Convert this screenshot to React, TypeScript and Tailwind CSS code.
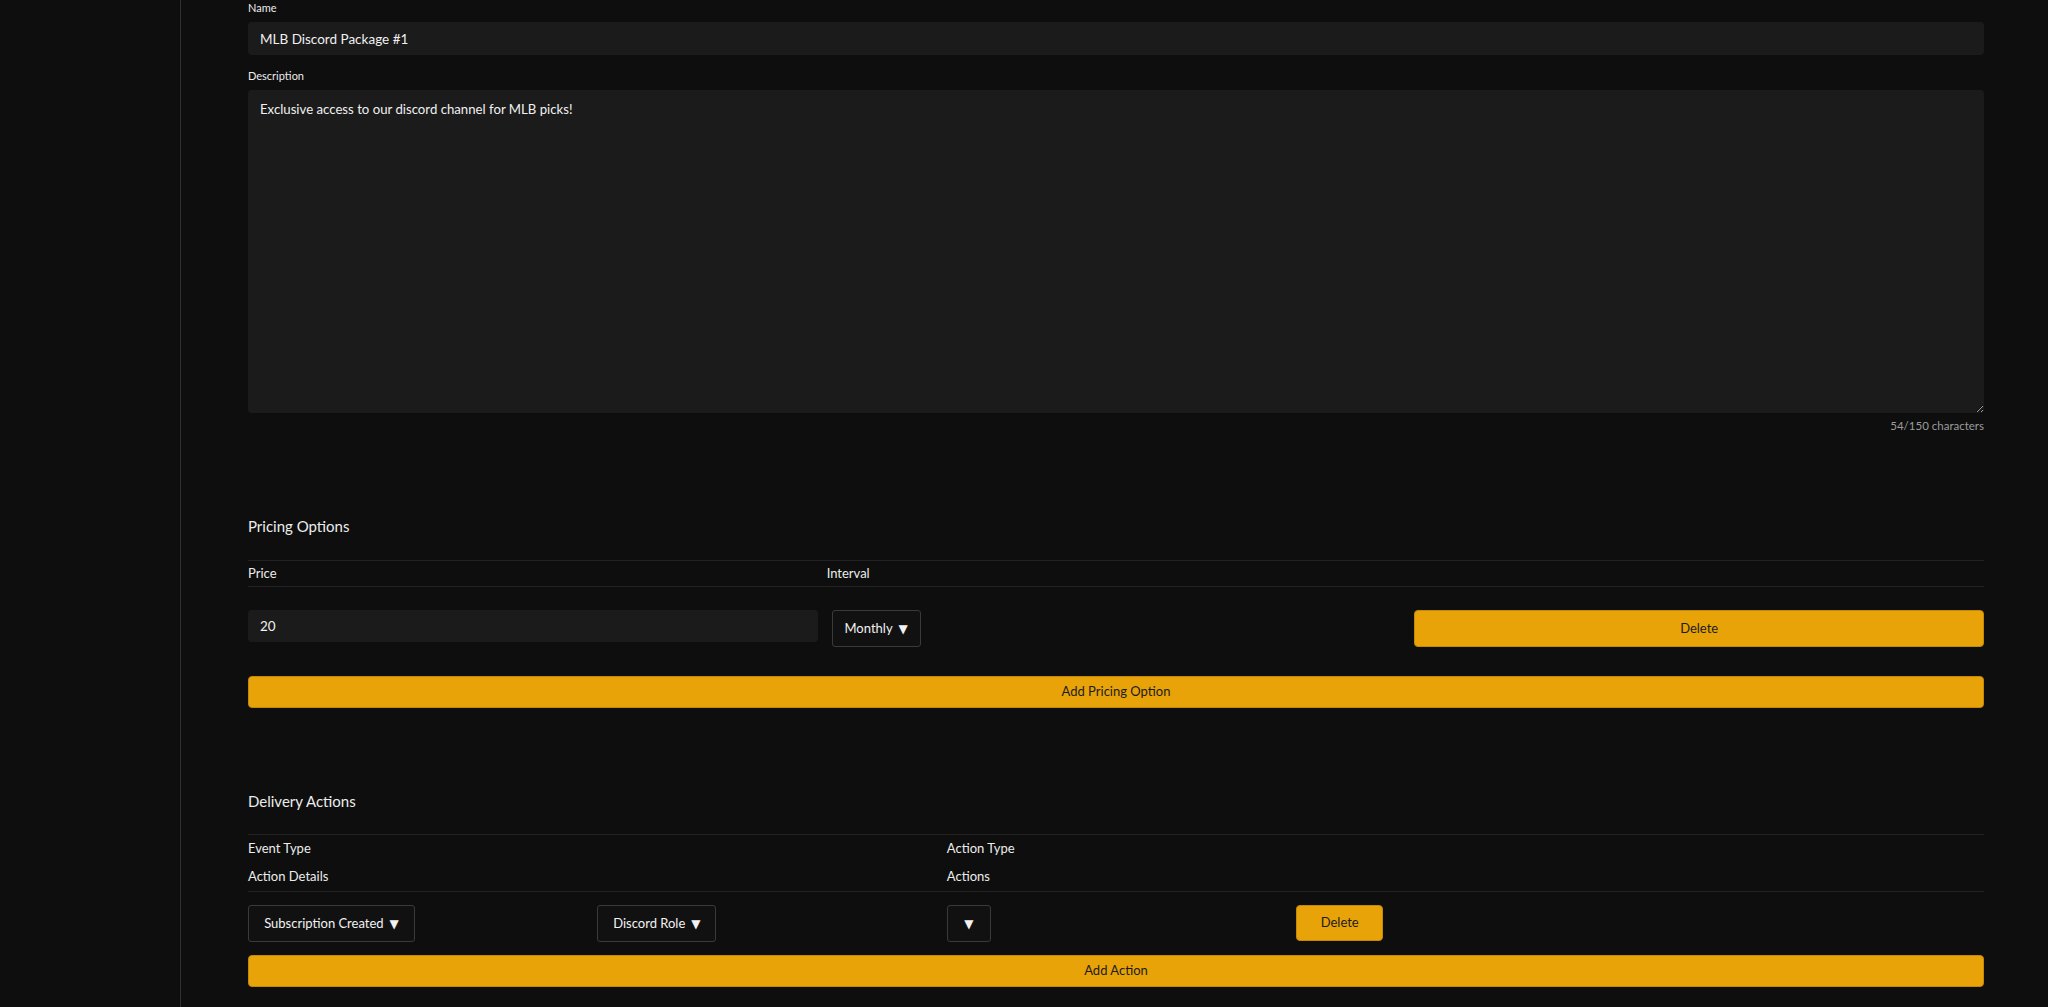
import React from "react";

function FakeSelect({ label, className = "" }: { label: string; className?: string }) {
  return (
    <button
      type="button"
      className={`h-[37px] whitespace-nowrap rounded-[3px] border border-[#3a3a3a] bg-[#111111] px-3 text-[13px] text-[#f2f2f2] flex items-center justify-center gap-[6px] ${className}`}
    >
      {label && <span>{label}</span>}
      <span className="text-[12px] font-['DejaVu_Sans',sans-serif]">▼</span>
    </button>
  );
}

function YellowButton({ children, className = "" }: { children: React.ReactNode; className?: string }) {
  return (
    <button
      type="button"
      className={`rounded-[4px] border border-[#c48a07] bg-[#e8a309] text-[13px] text-[#1c1c1c] flex items-center justify-center ${className}`}
    >
      {children}
    </button>
  );
}

export default function App() {
  return (
    <div className="flex h-[1007px] overflow-hidden bg-[#0e0e0e] text-[#ececec] font-[Lato,'Liberation_Sans',sans-serif]">
      {/* sidebar */}
      <aside className="w-[181px] shrink-0 border-r border-[#2f2f2f]" />

      <main className="flex-1 pl-[67px] pr-16">
        {/* name */}
        <label className="block text-[11px] leading-4">Name</label>
        <input
          className="mt-[6px] block h-[33px] w-full rounded-[4px] bg-[#1b1b1b] px-3 text-[13.5px] text-[#f0f0f0] outline-none"
          defaultValue="MLB Discord Package #1"
        />

        {/* description */}
        <label className="mt-[13px] block text-[11px] leading-4">Description</label>
        <textarea
          className="mt-[6px] block h-[323px] w-full resize-y rounded-[4px] bg-[#1b1b1b] px-3 py-[9px] text-[13.2px] leading-5 text-[#f0f0f0] outline-none"
          defaultValue="Exclusive access to our discord channel for MLB picks!"
        />
        <p className="mt-[5px] text-right text-[11.5px] leading-4 text-[#9c9c9c]">54/150 characters</p>

        {/* pricing options */}
        <h2 className="mt-[82px] text-[15px] leading-5">Pricing Options</h2>
        <div className="mt-[24px]">
          <div className="grid h-[27px] grid-cols-3 items-center border-y border-[#222222] text-[13px]">
            <span>Price</span>
            <span>Interval</span>
            <span />
          </div>
          <div className="grid grid-cols-3 items-start pt-[23px]">
            <div className="pr-[9px]">
              <input
                className="block h-[32px] w-full rounded-[4px] bg-[#1b1b1b] px-3 text-[13.5px] text-[#f0f0f0] outline-none"
                defaultValue="20"
              />
            </div>
            <div className="pl-[5px]">
              <FakeSelect label="Monthly" className="w-[89px]" />
            </div>
            <div className="pl-[9px]">
              <YellowButton className="h-[37px] w-full">Delete</YellowButton>
            </div>
          </div>
          <YellowButton className="mt-[29px] h-[32px] w-full">Add Pricing Option</YellowButton>
        </div>

        {/* delivery actions */}
        <h2 className="mt-[83px] text-[15px] leading-5">Delivery Actions</h2>
        <div className="mt-[23px]">
          <div className="grid grid-cols-5 gap-x-[11px] border-y border-[#222222] text-[13px]">
            <span className="col-span-2 flex h-[28px] items-center">Event Type</span>
            <span className="col-span-2 flex h-[28px] items-center">Action Type</span>
            <span className="col-span-2 flex h-[28px] items-center">Action Details</span>
            <span className="col-span-2 flex h-[28px] items-center">Actions</span>
          </div>
          <div className="grid grid-cols-5 items-start gap-x-[11px] pt-[13px]">
            <div>
              <FakeSelect label="Subscription Created" className="w-[167px]" />
            </div>
            <div>
              <FakeSelect label="Discord Role" className="w-[119px]" />
            </div>
            <div>
              <FakeSelect label="" className="w-[44px]" />
            </div>
            <div>
              <YellowButton className="h-[36px] w-[87px]">Delete</YellowButton>
            </div>
            <div />
          </div>
          <YellowButton className="mt-[13px] h-[32px] w-full">Add Action</YellowButton>
        </div>
      </main>
    </div>
  );
}
